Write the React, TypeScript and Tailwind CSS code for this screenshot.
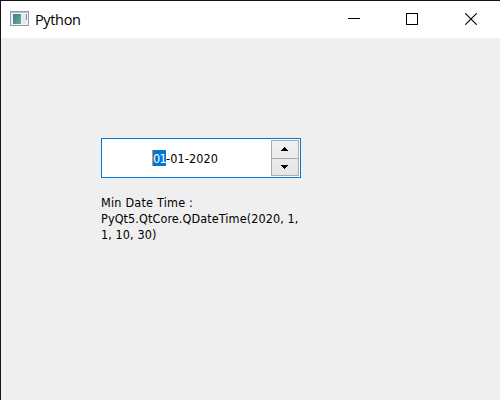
import React from "react";

function AppIcon() {
  return (
    <svg className="mb-px" width="19" height="16" viewBox="0 0 19 16" shapeRendering="crispEdges">
      <defs>
        <linearGradient id="pane" x1="0" y1="0" x2="1" y2="1">
          <stop offset="0" stopColor="#4277a0" />
          <stop offset="1" stopColor="#62b382" />
        </linearGradient>
      </defs>
      <rect x="0.5" y="0.5" width="18" height="14" fill="#f1f3f4" stroke="#959ca2" />
      <rect x="1" y="1" width="17" height="1" fill="#b9c0c5" />
      <rect x="3" y="3" width="8" height="10" fill="url(#pane)" />
      <rect x="12" y="3" width="4" height="10" fill="#e5e9e9" />
      <rect x="16" y="3" width="1" height="6" fill="#559c99" />
    </svg>
  );
}

function TitleBar() {
  return (
    <header className="flex h-[37px] items-center bg-white pl-[9px] [font-stretch:normal]">
      <AppIcon />
      <span className="ml-[6px] font-['Open_Sans',sans-serif] text-[14.5px] leading-[20px] tracking-[-0.35px] text-black">
        Python
      </span>
      <div className="mb-px ml-auto flex pr-[23px]">
        <svg className="mr-[46px]" width="12" height="12" shapeRendering="crispEdges">
          <path d="M0 5.5H12" stroke="#000" />
        </svg>
        <svg className="mr-[47px]" width="12" height="12" shapeRendering="crispEdges">
          <rect x="0.5" y="0.5" width="11" height="11" fill="none" stroke="#000" />
        </svg>
        <svg width="12" height="12">
          <path d="M0.3 0.3L11.7 11.7M11.7 0.3L0.3 11.7" stroke="#000" strokeWidth="1.1" />
        </svg>
      </div>
    </header>
  );
}

function DateEdit() {
  return (
    <div className="flex h-[40px] w-[200px] border border-[#0078d7] bg-white p-px pl-[50px]">
      <div className="flex flex-1 items-center leading-[18px]">
        <span className="h-[16px] w-[14px] border-l border-[#ff8728] bg-[#0078d7] tracking-[-0.6px] text-white">
          01
        </span>
        <span className="h-[16px] tracking-[0.12px]">-01-2020</span>
      </div>
      <div className="flex w-[28px] flex-col border border-[#acacac] bg-linear-to-b from-[#f0f0f0] to-[#e5e5e5]">
        <button className="flex h-[17px] items-center justify-center">
          <svg className="mr-px" width="7" height="4" shapeRendering="crispEdges">
            <path d="M3 0h1v1h1v1h1v1h1v1H0V3h1V2h1V1h1z" />
          </svg>
        </button>
        <button className="flex h-[18px] items-center justify-center border-t border-[#acacac]">
          <svg className="mr-px" width="7" height="4" shapeRendering="crispEdges">
            <path d="M0 0h7v1H6v1H5v1H4v1H3V3H2V2H1V1H0z" />
          </svg>
        </button>
      </div>
    </div>
  );
}

export default function App() {
  return (
    <div className="h-[400px] w-[500px] overflow-hidden border-t border-l border-[#17131a] bg-[#efefef] font-['DejaVu_Sans_Condensed','DejaVu_Sans',sans-serif] text-[12.5px] text-black [font-stretch:condensed]">
      <TitleBar />
      <main className="pt-[100px] pl-[100px]">
        <DateEdit />
        <p className="mt-[17px] w-[210px] leading-[16px] tracking-[0.1px]">
          <span className="tracking-[0.22px]">Min Date Time :</span>
          <br />
          PyQt5.QtCore.QDateTime(2020, 1,
          <br />
          1, 10, 30)
        </p>
      </main>
    </div>
  );
}
